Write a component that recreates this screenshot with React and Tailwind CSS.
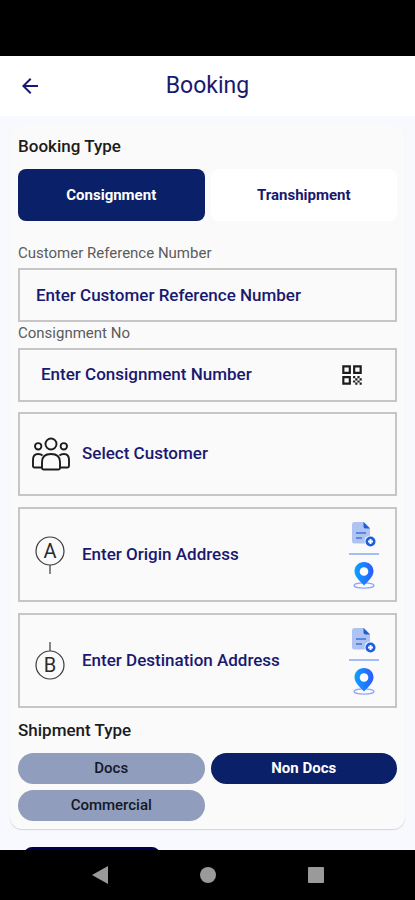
import { useState } from 'react';
import { MdArrowBack, MdQrCode } from 'react-icons/md';

const BOOKING_TYPES = ['Consignment', 'Transhipment'];
const SHIPMENT_TYPES = ['Docs', 'Non Docs', 'Commercial'];

function CustomersIcon() {
  return (
    <svg viewBox="0 0 38 34" className="h-[34px] w-[38px]" fill="none" stroke="#1c1c1c" strokeWidth="1.9" aria-hidden="true">
      <circle cx="19" cy="7" r="5.5" />
      <circle cx="6.2" cy="9.3" r="3.2" />
      <circle cx="31.8" cy="9.3" r="3.2" />
      <path d="M10 30.5H2.5q-1.5 0-1.5-1.5v-6q0-6 5-6 3 0 4.5 1.5" />
      <path d="M28 30.5h7.500q1.500 0 1.500-1.500v-6q0-6-5-6-3 0-4.500 1.500" />
      <path d="M11.5 32.5q-1.5 0-1.5-1.5v-6c0-5.500 3.500-8 9-8s9 2.500 9 8v6q0 1.500-1.500 1.500z" />
    </svg>
  );
}

function StopIcon({ letter, stemUp }) {
  return (
    <svg viewBox="0 0 32 38" className="h-[38px] w-8" fill="none" stroke="#3a3a3a" strokeWidth="1.2" aria-hidden="true">
      <circle cx="16" cy={stemUp ? 23 : 15} r="14" />
      <path d={stemUp ? 'M16 0v9' : 'M16 29v9'} />
      <text
        x="16"
        y={stemUp ? 30 : 22}
        textAnchor="middle"
        fontSize="20"
        fontFamily="Roboto, sans-serif"
        fill="#2c2c2c"
        stroke="none"
      >
        {letter}
      </text>
    </svg>
  );
}

function AddDocumentIcon() {
  return (
    <svg viewBox="0 0 26 26" className="h-[26px] w-[26px]" aria-hidden="true">
      <path d="M3.5 1H13l6 6v15.5H3.5Q1 22.5 1 20V3.5Q1 1 3.5 1z" fill="#afc3f3" />
      <path d="M12.5 1l6.5 6.5h-4.5q-2 0-2-2z" fill="#1f5fd6" />
      <path d="M5 12h10M5 17h6" stroke="#3f74dc" strokeWidth="1.6" />
      <circle cx="19.5" cy="20.5" r="6" fill="#fafafa" />
      <circle cx="19.5" cy="20.5" r="5" fill="#1a5fe0" />
      <path d="M19.5 18v5M17 20.5h5" stroke="#ffffff" strokeWidth="2" />
    </svg>
  );
}

function MapPinIcon({ id }) {
  return (
    <svg viewBox="0 0 24 28" className="h-7 w-6" aria-hidden="true">
      <defs>
        <linearGradient id={id} x1="0" y1="0" x2="1" y2="0">
          <stop offset="0" stopColor="#0da2ff" />
          <stop offset="1" stopColor="#2b5cff" />
        </linearGradient>
      </defs>
      <ellipse cx="12" cy="24.5" rx="10" ry="2.6" fill="none" stroke="#8fa6fb" strokeWidth="1.3" />
      <path d="M12 1c5.5 0 9.5 4 9.5 9.3C21.5 16 16 20 12 24.5 8 20 2.5 16 2.5 10.3 2.5 5 6.5 1 12 1z" fill={`url(#${id})`} />
      <circle cx="12" cy="10.5" r="4.3" fill="#ffffff" />
    </svg>
  );
}

function AddressField({ id, label, letter, stemUp }) {
  return (
    <div className="mt-[11px] flex h-[95px] items-center border-2 border-[#c6c6c6] pl-[14px] pr-4">
      <StopIcon letter={letter} stemUp={stemUp} />
      <input
        id={id}
        aria-label={label}
        placeholder={label}
        className="ml-4 min-w-0 flex-1 bg-transparent text-[17px] font-medium text-[#191970] outline-none placeholder:text-[#191970]"
      />
      <div className="flex w-[30px] flex-col items-center">
        <button type="button" aria-label="Add from address book">
          <AddDocumentIcon />
        </button>
        <span className="my-[6px] h-0.5 w-full bg-[#a5bdf5]" />
        <button type="button" aria-label="Pick on map">
          <MapPinIcon id={`${id}-pin`} />
        </button>
      </div>
    </div>
  );
}

export default function App() {
  const [bookingType, setBookingType] = useState('Consignment');
  const [shipmentType, setShipmentType] = useState('Non Docs');

  return (
    <div className="flex h-screen flex-col bg-[#f8f8ff] font-[Roboto,sans-serif]">
      <div className="h-14 shrink-0 bg-black" />

      <header className="grid h-[60px] shrink-0 grid-cols-[60px_1fr_60px] items-center bg-white text-[#191970]">
        <button type="button" aria-label="Back" className="flex justify-center">
          <MdArrowBack size={24} />
        </button>
        <h1 className="text-center text-[23px]">Booking</h1>
      </header>

      <main className="min-h-0 flex-1 overflow-hidden px-[10px] pt-[10px]">
        <section className="rounded-xl bg-[#fafafa] px-2 py-2 shadow-[0_1px_1px_rgba(0,0,0,0.15)]">
          <h2 className="text-[17px] font-medium leading-6 text-[#1c1c1c]">Booking Type</h2>
          <div className="mt-[11px] grid grid-cols-2 gap-[6px]">
            {BOOKING_TYPES.map((type) => (
              <button
                key={type}
                type="button"
                aria-pressed={bookingType === type}
                onClick={() => setBookingType(type)}
                className={`h-[52px] rounded-lg text-[15px] font-bold ${
                  bookingType === type ? 'bg-[#0a2169] text-white' : 'bg-white text-[#191970]'
                }`}
              >
                {type}
              </button>
            ))}
          </div>

          <label htmlFor="reference" className="mt-[22px] block text-[15px] leading-5 text-[#5c5c5c]">
            Customer Reference Number
          </label>
          <input
            id="reference"
            placeholder="Enter Customer Reference Number"
            className="mt-[5px] block h-[54px] w-full border-2 border-[#c6c6c6] px-4 text-[17px] font-medium text-[#191970] outline-none placeholder:text-[#191970]"
          />

          <label htmlFor="consignment" className="mt-px block text-[15px] leading-5 text-[#5c5c5c]">
            Consignment No
          </label>
          <div className="mt-[5px] flex h-[54px] items-center border-2 border-[#c6c6c6] pl-[21px] pr-[30px]">
            <input
              id="consignment"
              placeholder="Enter Consignment Number"
              className="min-w-0 flex-1 bg-transparent text-[17px] font-medium text-[#191970] outline-none placeholder:text-[#191970]"
            />
            <button type="button" aria-label="Scan code" className="text-[#1c1c1c]">
              <MdQrCode size={26} />
            </button>
          </div>

          <button
            type="button"
            className="mt-[10px] flex h-[84px] w-full items-center gap-3 border-2 border-[#c6c6c6] px-3 text-[17px] font-medium text-[#191970]"
          >
            <CustomersIcon />
            Select Customer
          </button>

          <AddressField id="origin" label="Enter Origin Address" letter="A" />
          <AddressField id="destination" label="Enter Destination Address" letter="B" stemUp />

          <h2 className="mt-[10px] text-[17px] font-medium leading-6 text-[#1c1c1c]">Shipment Type</h2>
          <div className="mt-[11px] grid grid-cols-2 gap-[6px]">
            {SHIPMENT_TYPES.map((type) => (
              <button
                key={type}
                type="button"
                aria-pressed={shipmentType === type}
                onClick={() => setShipmentType(type)}
                className={`h-[31px] rounded-full text-[15px] ${
                  shipmentType === type ? 'bg-[#0a2169] font-bold text-white' : 'bg-[#919dbd] font-medium text-[#111827]'
                }`}
              >
                {type}
              </button>
            ))}
          </div>
        </section>

        <button type="button" aria-label="Continue" className="ml-[14px] mt-[18px] h-12 w-[136px] rounded-lg bg-[#000050]" />
      </main>

      <nav className="flex h-[50px] shrink-0 items-center justify-around bg-black px-[45px] text-[#9a9a9a]">
        <button type="button" aria-label="System back">
          <svg viewBox="0 0 18 18" className="h-[18px] w-[18px]" fill="currentColor">
            <path d="M17 0v18L1 9z" />
          </svg>
        </button>
        <button type="button" aria-label="Home" className="h-4 w-4 rounded-full bg-[#9a9a9a]" />
        <button type="button" aria-label="Recent apps" className="h-4 w-4 rounded-[1px] bg-[#9a9a9a]" />
      </nav>
    </div>
  );
}
